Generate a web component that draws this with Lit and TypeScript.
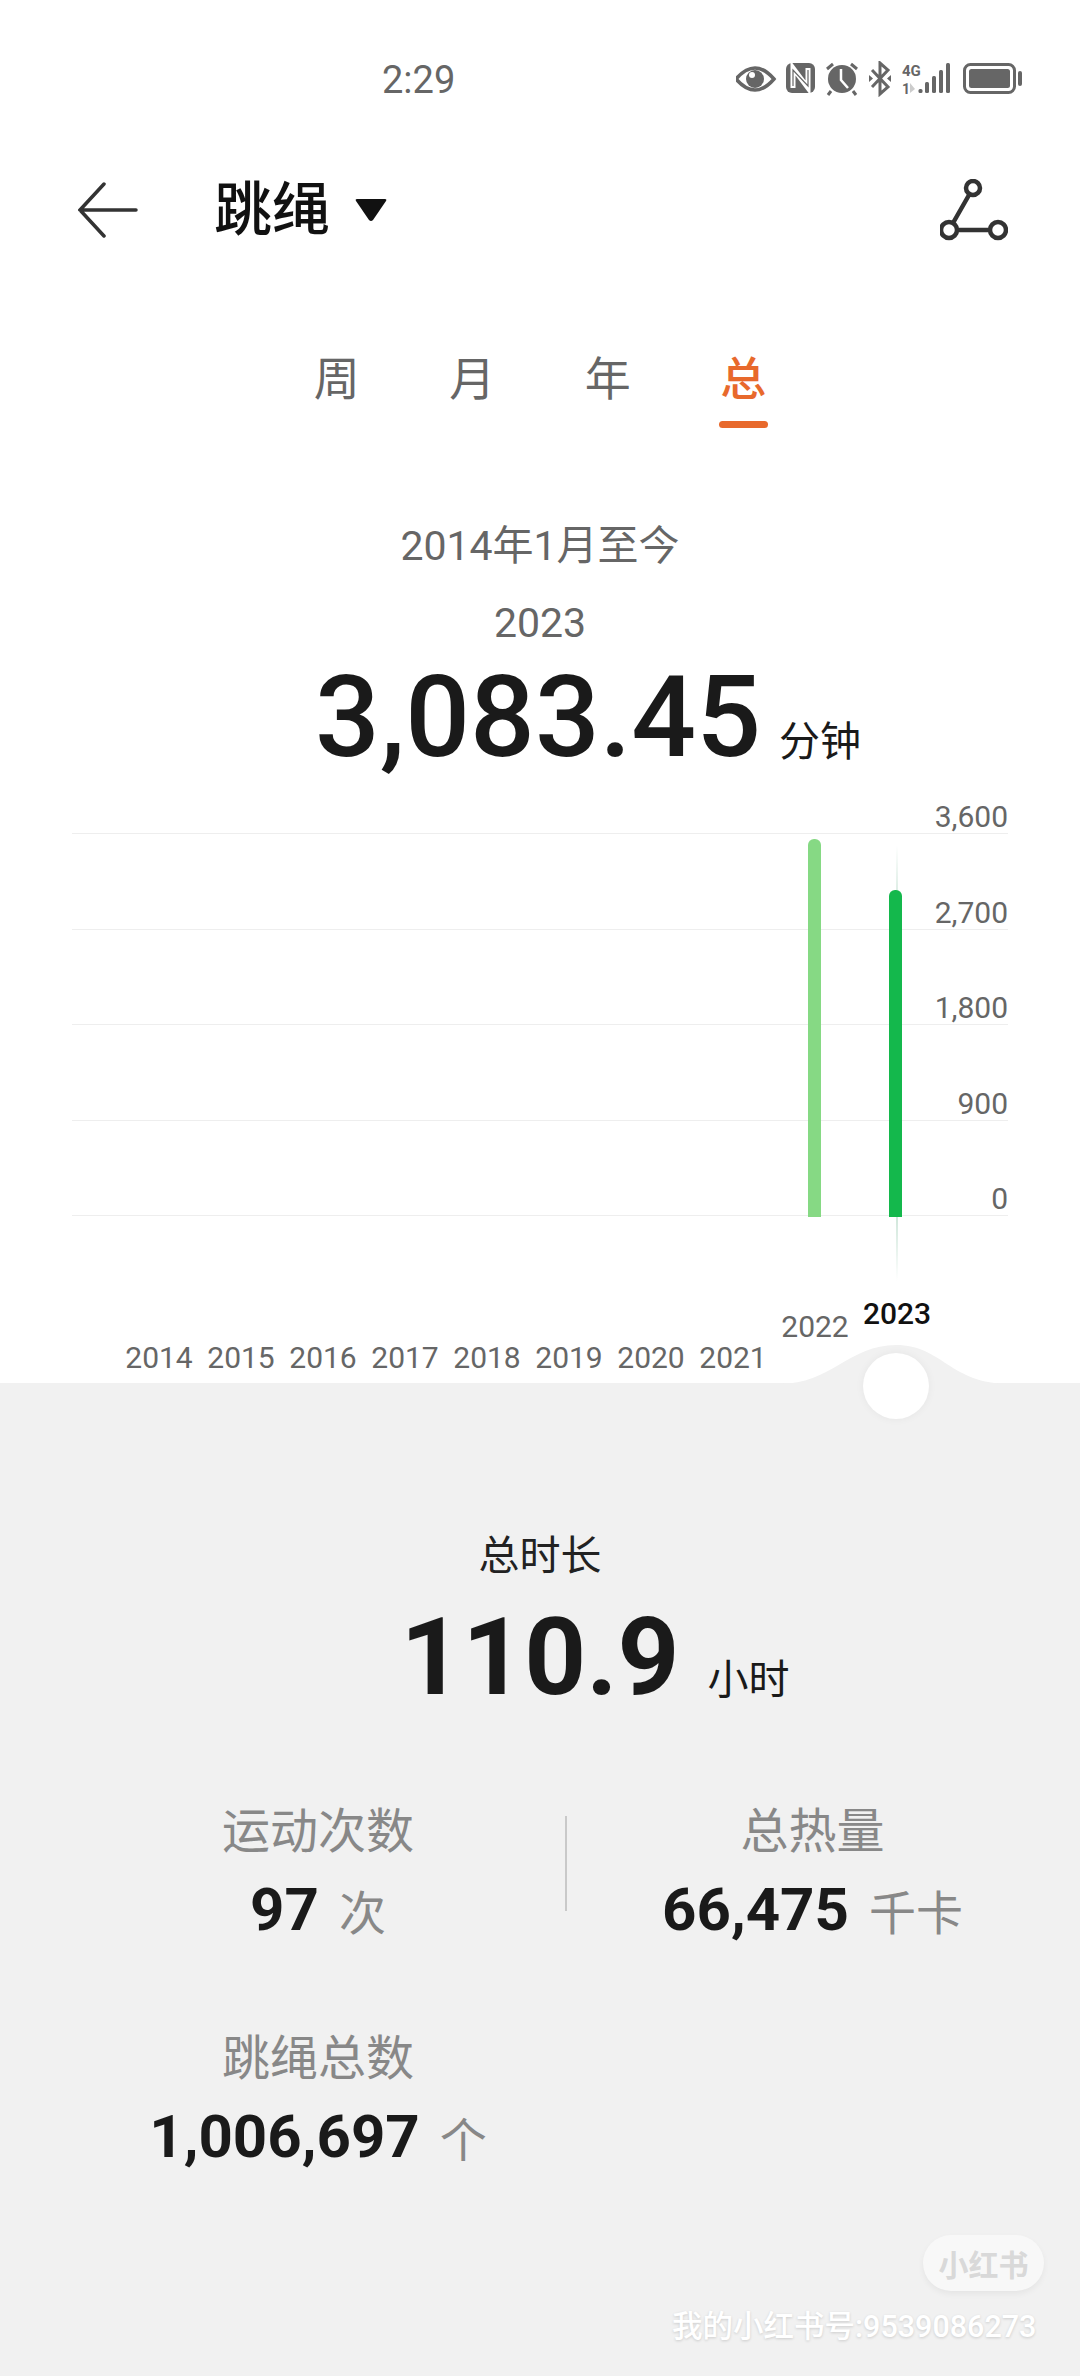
import { LitElement, html, css, svg, unsafeCSS } from "lit";
import { customElement } from "lit/decorators.js";

const FONT = unsafeCSS(`Roboto, "Noto Sans CJK SC", sans-serif`);

const grid = ["3,600", "2,700", "1,800", "900", "0"];
const years = [
  { y: "2014", lift: 0 }, { y: "2015", lift: 0 }, { y: "2016", lift: 0 }, { y: "2017", lift: 0 },
  { y: "2018", lift: 0 }, { y: "2019", lift: 0 }, { y: "2020", lift: 0 }, { y: "2021", lift: 0 },
  { y: "2022", lift: 31 }, { y: "2023", lift: 44, on: true },
];

@customElement("app-root")
export class AppRoot extends LitElement {
  static styles = css`
    :host { display: flex; flex-direction: column; width: 1080px; height: 2376px; background: #fff; font-family: ${FONT}; position: relative; overflow: hidden; }
    .status { height: 158px; flex: none; display: flex; align-items: center; padding-left: 382px; box-sizing: border-box; justify-content: space-between; padding-right: 56px; }
    .time { font-size: 38px; color: #666; line-height: 40px; padding-top: 2px; }
    .status svg { display: block; }
    .nav { height: 104px; flex: none; display: flex; align-items: center; padding: 0 72px 0 78px; }
    .title { margin-left: 76px; font-size: 58px; font-weight: 500; color: #111; line-height: 70px; }
    .tri { margin-left: 25px; display: block; }
    .share { margin-left: auto; display: block; }
    .tabs { flex: none; margin-top: 91px; display: flex; justify-content: center; height: 92px; }
    .tab { width: 135.5px; display: flex; flex-direction: column; align-items: center; font-size: 46px; line-height: 52px; color: #666; }
    .tab.on { color: #e8692c; font-weight: 500; }
    .tab i { display: block; width: 49px; height: 7px; border-radius: 4px; background: #e8692c; margin-top: 16px; }
    .range { margin-top: 76px; text-align: center; font-size: 41px; line-height: 50px; color: #666; }
    .sel { margin-top: 27px; text-align: center; font-size: 41px; line-height: 50px; color: #666; }
    .big { flex: none; display: flex; justify-content: center; align-items: baseline; margin-top: 11px; padding-left: 96px; height: 141px; line-height: 116px; color: #1a1a1a; }
    .big b { font-size: 114px; font-weight: 500; }
    .big span { font-size: 41px; margin-left: 18px; }
    .chart { position: relative; height: 583px; flex: none; }
    .rows { padding: 0 72px; position: relative; }
    .row { height: 95.5px; box-sizing: border-box; border-bottom: 1.5px solid #eeeeee; display: flex; justify-content: flex-end; align-items: flex-end; font-size: 30px; line-height: 32px; color: #666; }
    .row:first-child { height: 34px; }
    .bar { position: absolute; bottom: 0; width: 13px; border-radius: 6px 6px 0 0; }
    .guide { position: absolute; left: 896px; top: 45px; height: 436px; width: 1.5px; background: linear-gradient(#fff, #cfe6da 15%, #cfe6da 85%, #fff); }
    .plot { position: absolute; left: 0; right: 0; top: 0; height: 417px; }
    .years { position: absolute; left: 118px; bottom: 5px; display: flex; align-items: flex-end; }
    .yr { width: 82px; text-align: center; font-size: 30px; line-height: 40px; color: #666; }
    .yr.on { color: #111; font-weight: 500; }
    .panel { position: relative; background: #f1f1f1; flex: 1; padding-top: 1px; box-sizing: border-box; }
    .hump { position: absolute; left: 780px; top: -40px; display: block; }
    .knob { position: absolute; left: 863px; top: -30px; width: 66px; height: 66px; border-radius: 50%; background: #fff; box-shadow: 0 0 8px rgba(0,0,0,.05); }
    .total { margin-top: 147px; text-align: center; font-size: 41px; line-height: 50px; color: #222; }
    .hero { display: flex; justify-content: center; align-items: baseline; margin-top: 18px; padding-left: 110px; height: 116px; line-height: 116px; color: #1a1a1a; }
    .hero b { font-size: 108px; font-weight: 700; }
    .hero span { font-size: 41px; margin-left: 28px; }
    .stats { margin-top: 87px; display: grid; grid-template-columns: 565px 495px; grid-auto-rows: 227px; }
    .stat { display: flex; flex-direction: column; align-items: center; }
    .stat.l { width: 636px; }
    .stat.r { position: relative; }
    .lab { font-size: 48px; line-height: 60px; color: #888; }
    .val { display: flex; align-items: baseline; margin-top: 12px; color: #1a1a1a; line-height: 72px; }
    .val b { font-size: 60px; font-weight: 700; }
    .val span { font-size: 47px; color: #888; margin-left: 20px; }
    .divider { position: absolute; left: 0; top: 14px; width: 1.5px; height: 95px; background: #c9c9c9; }
    .pill { position: absolute; left: 923px; top: 2235px; width: 121px; height: 56px; border-radius: 28px; background: #f8f8f8; box-shadow: 0 3px 6px rgba(0,0,0,.05); display: flex; align-items: center; justify-content: center; font-size: 30px; font-weight: 700; color: #d9d9d9; }
    .mark { position: absolute; left: 672px; top: 2308px; font-size: 30.5px; line-height: 38px; font-weight: 500; color: #fff; text-shadow: 0 1px 3px rgba(0,0,0,.16); white-space: nowrap; }
  `;

  private statusIcons() {
    return html`<svg width="288" height="36" viewBox="733 62 288 36" fill="#666" stroke="none">
      ${svg`
      <path d="M733 80 Q752 58 771 80 Q752 102 733 80Z" fill="none" stroke="#666" stroke-width="3.5"/>
      <circle cx="752" cy="80" r="9"/><circle cx="749" cy="76" r="3" fill="#fff"/>
      <rect x="783" y="64" width="29" height="30" rx="6"/>
      <path d="M790 89V69L805 89V69" fill="none" stroke="#fff" stroke-width="5"/>
      <path d="M790 87V71L805 87V71" fill="none" stroke="#666" stroke-width="1.2"/>
      <circle cx="839" cy="80" r="14"/>
      <path d="M838 70V81L845 89" fill="none" stroke="#fff" stroke-width="2.5"/>
      <path d="M824 70L830 65M854 70L848 65M828 92L825 96M850 92L853 96" stroke="#666" stroke-width="3"/>
      <path d="M869 71L885 88L877 95V64L885 71L869 88" fill="none" stroke="#666" stroke-width="3"/>
      <path d="M866 76L870 79.500L866 83ZM888 76L884 79.500L888 83Z"/>
      <text x="899" y="77" font-size="15" font-weight="700" font-family="Roboto">4G</text>
      <text x="899" y="95" font-size="14" font-weight="700" font-family="Roboto">1</text>
      <path d="M907 84L912 90L907 94Z" fill="#ccc"/>
      <rect x="915.500" y="90" width="4" height="4" rx="1.5"/>
      <rect x="922" y="83" width="4" height="11" rx="1.5"/>
      <rect x="929" y="77" width="4" height="17" rx="1.5"/>
      <rect x="936" y="71" width="4" height="23" rx="1.5"/>
      <rect x="943" y="64" width="4" height="30" rx="1.5"/>
      <rect x="961.500" y="65.500" width="50" height="28" rx="6" fill="none" stroke="#666" stroke-width="3"/>
      <rect x="966" y="70" width="41" height="19" rx="2.500"/>
      <rect x="1015" y="72" width="4" height="15" rx="2"/>
      `}
    </svg>`;
  }

  render() {
    return html`
      <div class="status"><span class="time">2:29</span>${this.statusIcons()}</div>
      <div class="nav">
        <svg width="60" height="56" viewBox="0 0 60 56" fill="none" stroke="#333" stroke-width="3.500" stroke-linecap="round"><path d="M2 28H58M26 2L2 28L26 54"/></svg>
        <span class="title">跳绳</span>
        <svg class="tri" width="32" height="24" viewBox="0 0 32 24"><path d="M2 1H30Q32 1 31 3L18 22Q16 24 14 22L1 3Q0 1 2 1Z" fill="#111"/></svg>
        <svg class="share" width="68" height="62" viewBox="0 0 68 62" fill="none" stroke="#333" stroke-width="4.500"><circle cx="33" cy="9" r="7"/><circle cx="9" cy="51" r="8"/><circle cx="58" cy="51" r="8"/><path d="M29 16L13 44M17 51H50"/></svg>
      </div>
      <div class="tabs">
        <div class="tab">周</div><div class="tab">月</div><div class="tab">年</div>
        <div class="tab on">总<i></i></div>
      </div>
      <div class="range">2014年1月至今</div>
      <div class="sel">2023</div>
      <div class="big"><b>3,083.45</b><span>分钟</span></div>
      <div class="chart">
        <div class="rows">${grid.map((g) => html`<div class="row">${g}</div>`)}</div>
        <div class="guide"></div>
        <div class="plot">
          <div class="bar" style="left:808px;height:378px;background:#86d984"></div>
          <div class="bar" style="left:889px;height:327px;background:#14b84c"></div>
        </div>
        <div class="years">${years.map((y) => html`<div class="yr ${y.on ? "on" : ""}" style="margin-bottom:${y.lift}px">${y.y}</div>`)}</div>
      </div>
      <div class="panel">
        <svg class="hump" width="230" height="41" viewBox="0 0 230 41"><path d="M0 41C50 41 70 2 116 2C162 2 170 41 230 41Z" fill="#f1f1f1"/></svg>
        <div class="knob"></div>
        <div class="total">总时长</div>
        <div class="hero"><b>110.9</b><span>小时</span></div>
        <div class="stats">
          <div class="stat l"><div class="lab">运动次数</div><div class="val"><b>97</b><span>次</span></div></div>
          <div class="stat r"><div class="divider"></div><div class="lab">总热量</div><div class="val"><b>66,475</b><span>千卡</span></div></div>
          <div class="stat l"><div class="lab">跳绳总数</div><div class="val"><b>1,006,697</b><span>个</span></div></div>
        </div>
      </div>
      <div class="pill">小红书</div>
      <div class="mark">我的小红书号:9539086273</div>
    `;
  }
}
